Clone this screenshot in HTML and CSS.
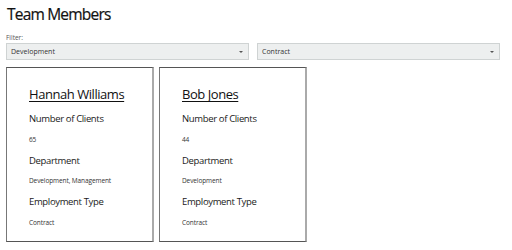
FILE: index.html
```html
<!DOCTYPE html>
<html>
<head>
<meta charset="utf-8">
<link rel="stylesheet" href="styles.css">
</head>
<body>
<h1 class="title">Team Members</h1>
<div class="filter-label">Filter:</div>
<div class="filters">
  <div class="select"><span>Development</span><i class="arrow"></i></div>
  <div class="select"><span>Contract</span><i class="arrow"></i></div>
</div>
<div class="cards">
  <div class="card">
    <div class="name">Hannah Williams</div>
    <div class="label">Number of Clients</div>
    <div class="value">65</div>
    <div class="label">Department</div>
    <div class="value">Development, Management</div>
    <div class="label">Employment Type</div>
    <div class="value">Contract</div>
  </div>
  <div class="card">
    <div class="name">Bob Jones</div>
    <div class="label">Number of Clients</div>
    <div class="value">44</div>
    <div class="label">Department</div>
    <div class="value">Development</div>
    <div class="label">Employment Type</div>
    <div class="value">Contract</div>
  </div>
</div>
</body>
</html>
```
FILE: styles.css
```css
html, body {
  margin: 0;
  padding: 0;
  background: #fff;
}
body {
  font-family: "Open Sans", "Noto Sans", sans-serif;
  color: #222;
  padding: 0 12px 0 6px;
}
.title {
  margin: 0;
  padding-top: 3px;
  font-size: 15.5px;
  font-weight: 400;
  line-height: 22px;
  color: #111;
  padding-left: 1px;
  letter-spacing: -0.8px;
  -webkit-text-stroke: 0.2px #111;
}
.filter-label {
  margin-top: 8px;
  font-size: 6.5px;
  line-height: 9px;
  color: #555;
}
.filters {
  display: flex;
  gap: 8px;
  margin-top: 1px;
}
.select {
  flex: 1;
  height: 17px;
  box-sizing: border-box;
  border: 1px solid #cfd3d3;
  background: #edefef;
  display: flex;
  align-items: center;
  justify-content: space-between;
  padding: 0 5px 0 4px;
  font-size: 7px;
  color: #333;
}
.arrow {
  width: 0;
  height: 0;
  border-left: 2px solid transparent;
  border-right: 2px solid transparent;
  border-top: 2px solid #555;
}
.cards {
  display: flex;
  gap: 5px;
  margin-top: 7px;
}
.card {
  width: 148px;
  height: 175px;
  box-sizing: border-box;
  border-top: 1px solid #555;
  border-bottom: 1px solid #555;
  border-left: 1px solid #777;
  border-right: 2px solid #aaa;
  padding: 16px 0 0 22px;
}
.name {
  font-size: 13px;
  line-height: 21px;
  text-decoration: underline;
  text-underline-offset: 2px;
  text-decoration-thickness: 1px;
  color: #111;
  margin-bottom: 4px;
  letter-spacing: -0.45px;
}
.label {
  font-size: 9.5px;
  line-height: 20.8px;
  color: #1a1a1a;
  letter-spacing: -0.35px;
}
.value {
  font-size: 6.5px;
  line-height: 20.8px;
  color: #333;
  letter-spacing: -0.1px;
}
```
